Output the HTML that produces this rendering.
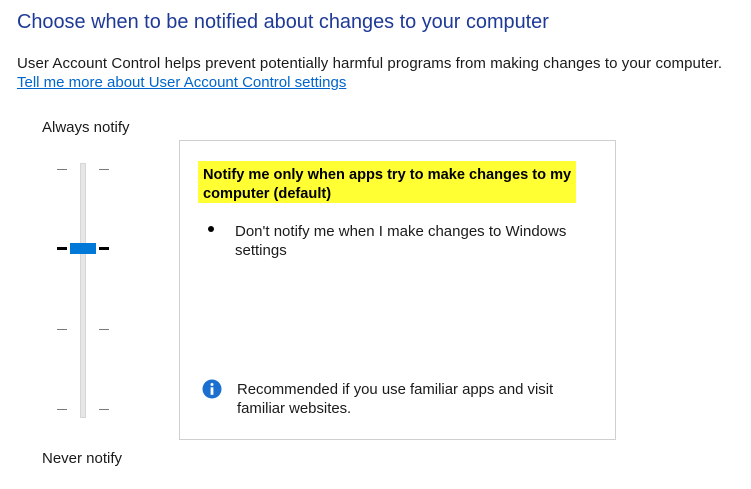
<!DOCTYPE html>
<html><head><meta charset="utf-8"><style>
*{margin:0;padding:0;box-sizing:border-box}
body{width:751px;height:489px;background:#fff;position:relative;overflow:hidden;font-family:"Liberation Sans",sans-serif;color:#1a1a1a;font-size:15px}
.a{position:absolute;white-space:nowrap}
.t{background:#7a7a7a;height:1px;width:10px;position:absolute}
.tb{background:#000;height:3px;width:10px;position:absolute}
</style></head><body>
<div class="a" style="left:17px;top:11px;font-size:19.9px;color:#1e3a96">Choose when to be notified about changes to your computer</div>
<div class="a" style="left:17px;top:55px;font-size:15px;letter-spacing:0.08px">User Account Control helps prevent potentially harmful programs from making changes to your computer.</div>
<div class="a" style="left:17px;top:74px;font-size:15px;color:#0066cc;text-decoration:underline">Tell me more about User Account Control settings</div>
<div class="a" style="left:42px;top:119px;font-size:15px">Always notify</div>
<div class="a" style="left:42px;top:450px;font-size:15px">Never notify</div>
<div class="a" style="left:80px;top:163px;width:6px;height:255px;background:#e6e6e6;border:1px solid #d6d6d6"></div>
<div class="t" style="left:57px;top:169px"></div><div class="t" style="left:99px;top:169px"></div>
<div class="tb" style="left:57px;top:247px"></div><div class="tb" style="left:99px;top:247px"></div>
<div class="t" style="left:57px;top:329px"></div><div class="t" style="left:99px;top:329px"></div>
<div class="t" style="left:57px;top:409px"></div><div class="t" style="left:99px;top:409px"></div>
<div class="a" style="left:70px;top:243px;width:26px;height:11px;background:#0078d7"></div>
<div class="a" style="left:179px;top:140px;width:437px;height:300px;border:1px solid #cfcfcf"></div>
<div class="a" style="left:198px;top:161px;width:378px;height:42px;background:#ffff33"></div>
<div class="a" style="left:203px;top:166px;font-size:14.6px;font-weight:bold;line-height:19px;color:#000">Notify me only when apps try to make changes to my<br>computer (default)</div>
<div class="a" style="left:208px;top:226px;width:6px;height:6px;border-radius:50%;background:#000"></div>
<div class="a" style="left:235px;top:222px;font-size:15px;line-height:19px">Don't notify me when I make changes to Windows<br>settings</div>
<svg class="a" style="left:202px;top:379px" width="20" height="20" viewBox="0 0 20 20"><circle cx="10" cy="10" r="9.5" fill="#1a6fd0"/><circle cx="10" cy="5.5" r="1.5" fill="#fff"/><rect x="8.6" y="8.3" width="2.8" height="7.5" fill="#fff"/></svg>
<div class="a" style="left:237px;top:381px;font-size:14.9px;line-height:19px">Recommended if you use familiar apps and visit<br>familiar websites.</div>
</body></html>
